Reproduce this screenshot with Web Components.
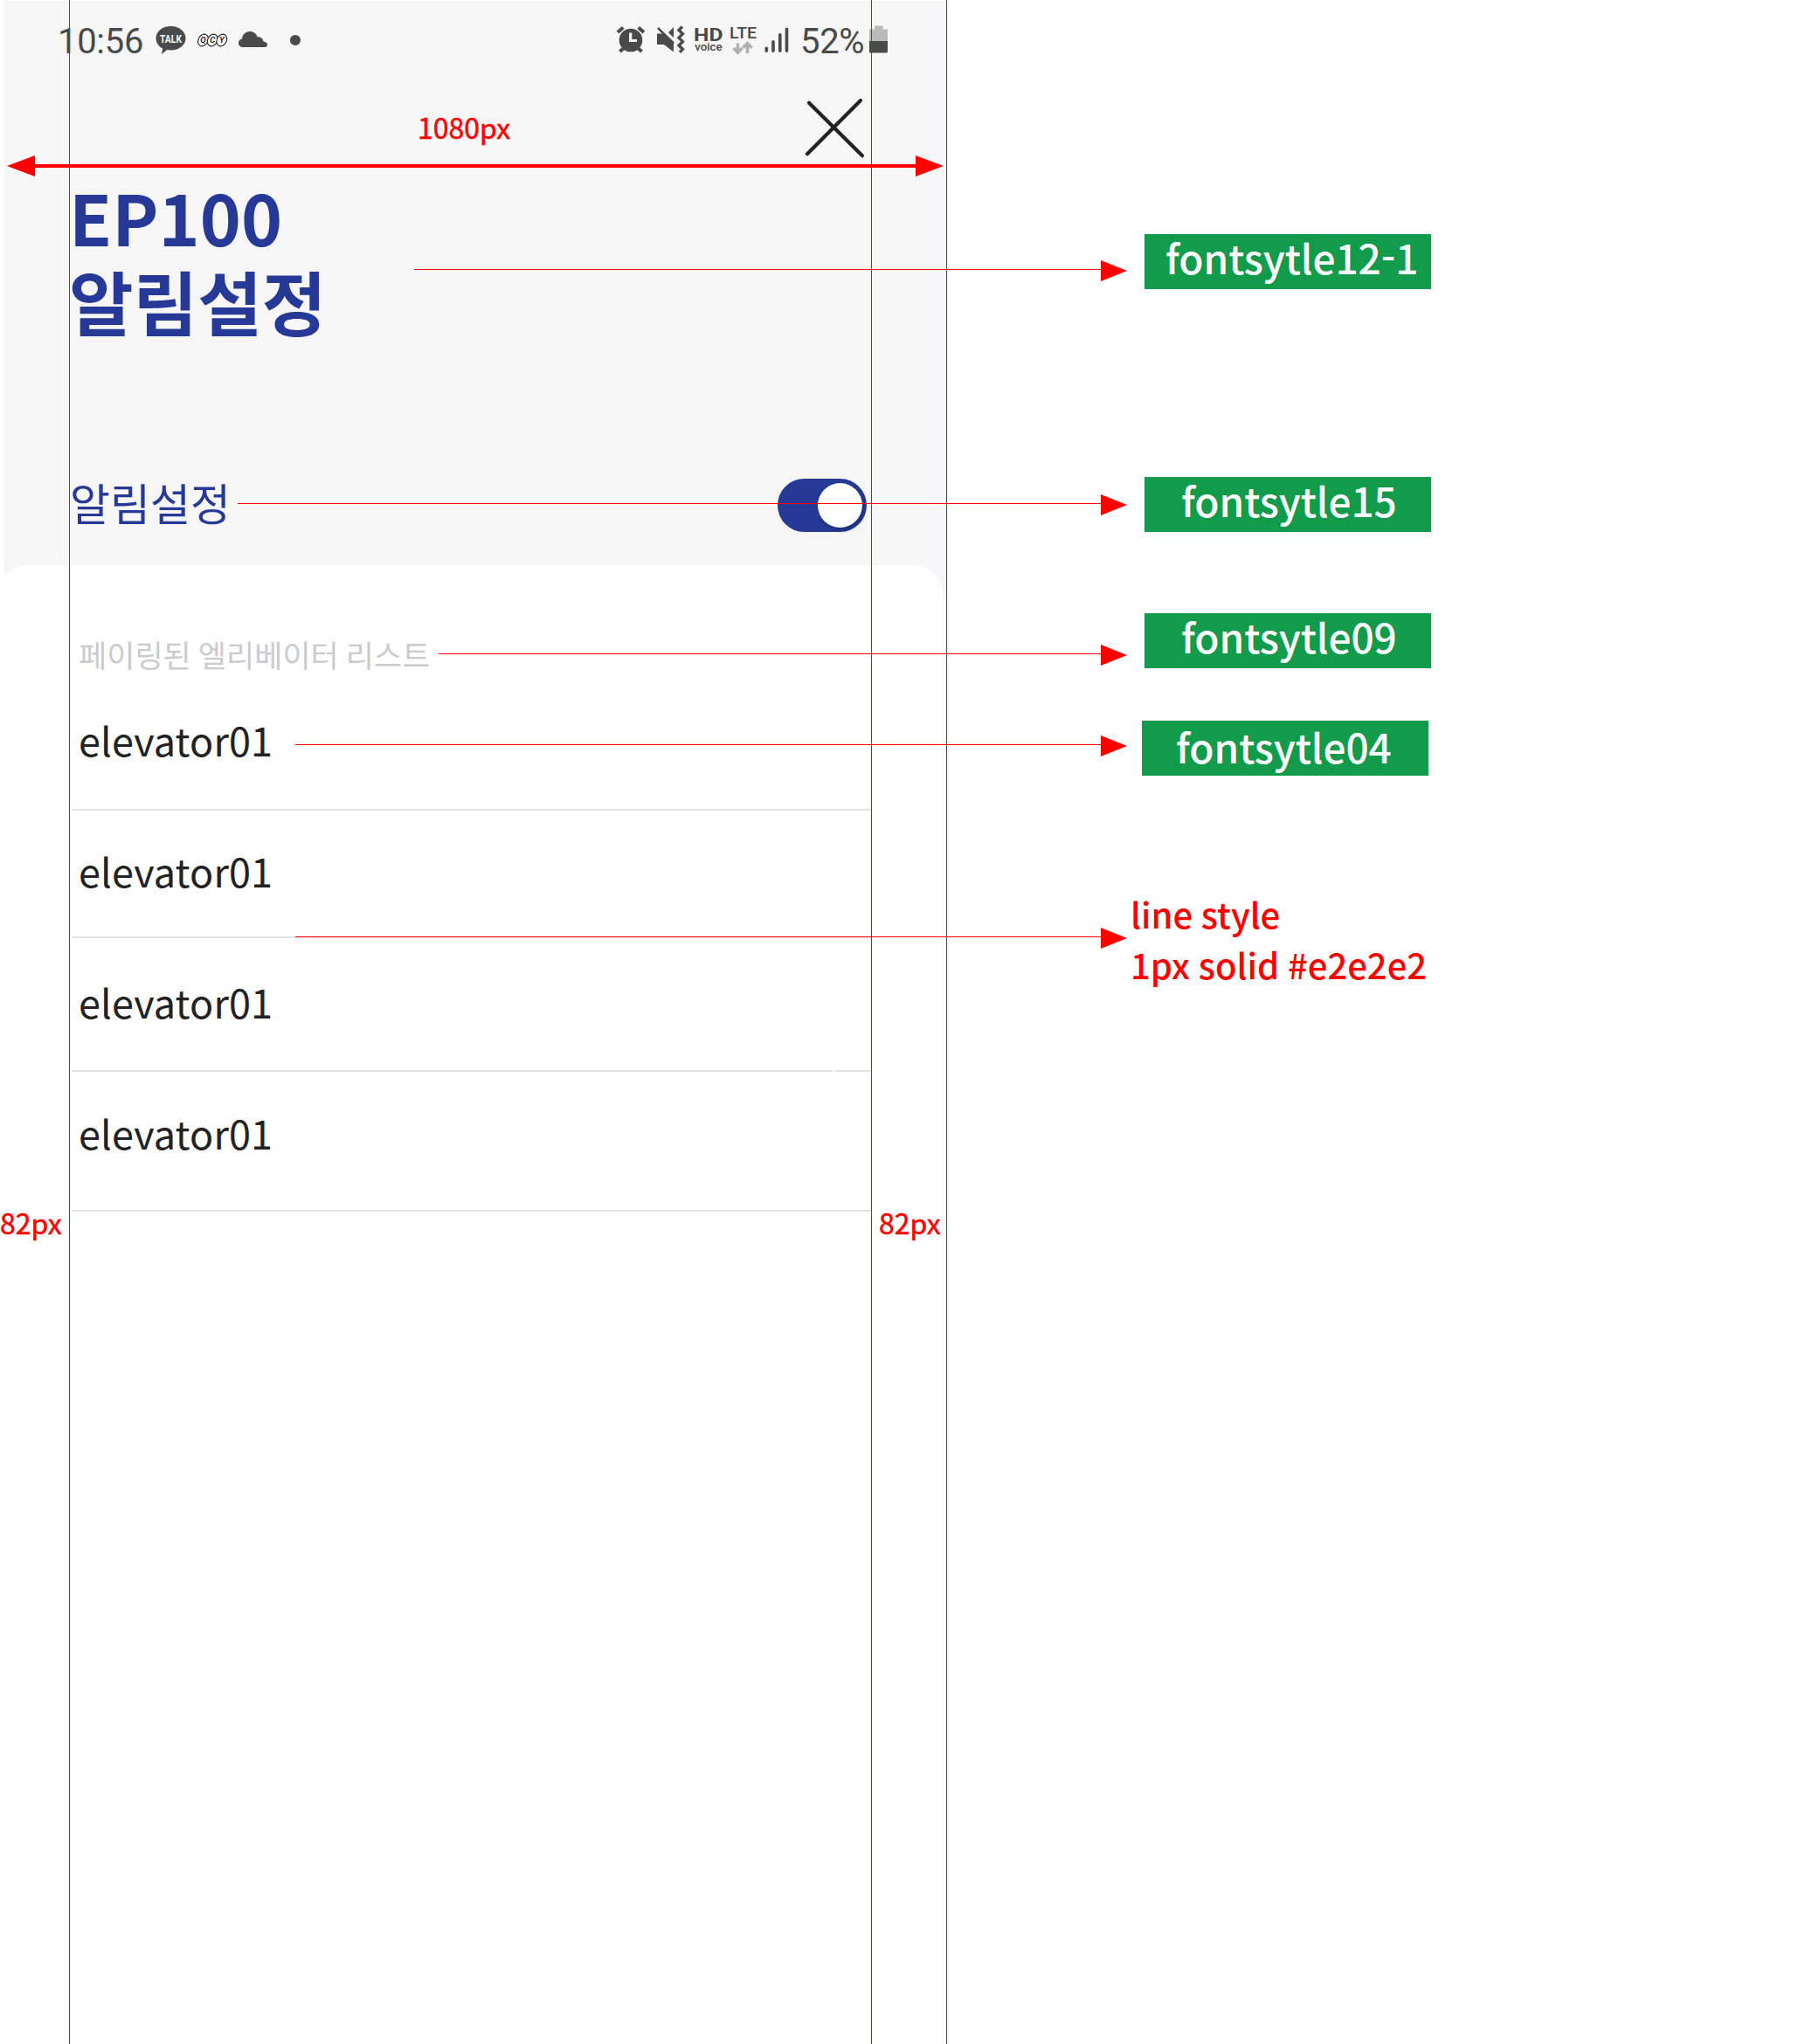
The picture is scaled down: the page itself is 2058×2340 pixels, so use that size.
<!DOCTYPE html>
<html lang="ko">
<head>
<meta charset="utf-8">
<title>EP100 알림설정</title>
<style>
html,body{margin:0;padding:0;background:#fff}
body{font-family:"Noto Sans CJK KR","Noto Sans",sans-serif}
</style>
</head>
<body>
<spec-board>
  <phone-screen>
    <status-bar slot="status"></status-bar>
    <close-button slot="nav"></close-button>
    <page-title slot="title">EP100<br>알림설정</page-title>
    <setting-row slot="setting">알림설정</setting-row>
    <list-heading slot="list">페이링된 엘리베이터 리스트</list-heading>
    <list-row slot="list" style="--above:43px;--below:49px">elevator01</list-row>
    <list-row slot="list" style="--above:39px;--below:45px">elevator01</list-row>
    <list-row slot="list" style="--above:43px;--below:48px;--gap:#fff">elevator01</list-row>
    <list-row slot="list" style="--above:40px;--below:58px">elevator01</list-row>
  </phone-screen>

  <guide-line slot="marks" style="--x:79px"></guide-line>
  <guide-line slot="marks" style="--x:997px"></guide-line>
  <guide-line slot="marks" style="--x:1083px"></guide-line>
  <size-arrow slot="marks" style="--x:8px;--y:178px;--w:1072px"></size-arrow>
  <spec-note slot="marks" style="--x:478px;--y:121px;--s:32px;--lh:48px;--w:400;--stroke:.5px">1080px</spec-note>
  <spec-note slot="marks" style="--x:0px;--y:1375px;--s:32px;--lh:48px;--w:400;--stroke:.5px">82px</spec-note>
  <spec-note slot="marks" style="--x:1006px;--y:1375px;--s:32px;--lh:48px;--w:400;--stroke:.5px">82px</spec-note>
  <call-arrow slot="marks" style="--x:474px;--y:298px"></call-arrow>
  <call-arrow slot="marks" style="--x:272px;--y:566px"></call-arrow>
  <call-arrow slot="marks" style="--x:502px;--y:738px"></call-arrow>
  <call-arrow slot="marks" style="--x:338px;--y:842px"></call-arrow>
  <call-arrow slot="marks" style="--x:338px;--y:1062px"></call-arrow>
  <style-badge slot="marks" style="--x:1310px;--y:267.5px;--pad:24px;--ty:-3px">fontsytle12-1</style-badge>
  <style-badge slot="marks" style="--x:1310px;--y:545.5px;--pad:42px;--ty:-3px">fontsytle15</style-badge>
  <style-badge slot="marks" style="--x:1310px;--y:701.5px;--pad:42px;--ty:-3px">fontsytle09</style-badge>
  <style-badge slot="marks" style="--x:1307px;--y:824.5px;--pad:39px;--ty:0px">fontsytle04</style-badge>
  <spec-note slot="marks" style="--x:1294px;--y:1017px;--s:40px;--lh:58px">line style<br>1px solid #e2e2e2</spec-note>
</spec-board>

<script>
const define=(name,html)=>{
  const t=document.createElement('template');
  t.innerHTML=html;
  customElements.define(name,class extends HTMLElement{
    constructor(){super();this.attachShadow({mode:'open'}).append(t.content.cloneNode(true));}
  });
};

define('spec-board',`<style>:host{display:block;position:relative;width:2058px;height:2340px;overflow:hidden;background:#fff}</style><slot></slot><slot name="marks"></slot>`);

define('phone-screen',`<style>
:host{display:flex;flex-direction:column;width:1086px;height:2340px}
.top{margin:1px 0 0 5px;width:1081px;height:646px;background:#f6f6f6;display:flex;flex-direction:column}
.nav{height:108px;display:flex;justify-content:flex-end;padding:20px 97px 0 0;box-sizing:border-box}
.body{flex:1;display:flex;background:linear-gradient(#f6f6f6,#f6f6f6) 5px 0/1081px 34px no-repeat,linear-gradient(90deg,#fff 1079px,#f9f9f9 1079px 1081px,#fff 1081px 1084px,#f7f7f7 1084px)}
.sheet{width:1080px;margin-left:-1px;border-radius:32px 32px 0 0;background:#fff;display:flex;flex-direction:column;padding:77px 80px 0 83px;box-sizing:border-box}
</style>
<div class="top"><slot name="status"></slot><div class="nav"><slot name="nav"></slot></div><slot name="title"></slot><slot name="setting"></slot></div>
<div class="body"><div class="sheet"><slot name="list"></slot></div></div>`);

define('status-bar',`<style>
:host{display:flex;justify-content:space-between;align-items:center;height:90px;padding:0 69px 0 61px;font-family:Roboto,sans-serif;color:#4a4a4a;box-sizing:border-box}
div{display:flex;align-items:center}
svg{display:block;flex:none}
.t{font-size:40px;line-height:48px;white-space:nowrap;letter-spacing:-.3px;padding-top:4px;width:110px;box-sizing:border-box}
.p{width:79px}
</style>
<div><span class="t">10:56</span>
<svg width="170" height="40" viewBox="176 26 170 40">
<path fill="#4a4a4a" d="M195.500 30c9.500 0 17 6 17 13.700s-7.500 13.800-17 13.800c-1.500 0-3-.2-4.300-.4l-6.200 5 1.200-6.600c-4.600-2.300-7.700-6.800-7.700-11.800 0-7.700 7.500-13.700 17-13.700z"/>
<text x="183" y="48.500" font-size="12" font-weight="700" fill="#f5f5f5" textLength="25" lengthAdjust="spacingAndGlyphs">TALK</text>
<g fill="#fff" stroke="#2a2424" stroke-width="1.100"><ellipse cx="232.500" cy="46" rx="5.500" ry="7.200" transform="rotate(28 232.500 46)"/><ellipse cx="243.200" cy="46" rx="5.500" ry="7.200" transform="rotate(28 243.200 46)"/><ellipse cx="253.800" cy="46" rx="5.500" ry="7.200" transform="rotate(28 253.800 46)"/></g>
<g font-size="9.500" font-weight="700" font-style="italic" fill="#2a2424" text-anchor="middle"><text x="232.500" y="49.300">Q</text><text x="243.200" y="49.300">C</text><text x="253.800" y="49.300">Y</text></g>
<path fill="#4a4a4a" d="M278.500 54c-3.300 0-5.500-2-5.500-4.800 0-2.500 1.700-4.300 4-4.700.5-5 4.300-8.500 9-8.500 4 0 7.400 2.500 8.600 6.200 4 0 6.600 2 7 5.600 2.600.2 4.400 1.500 4.400 3.400 0 1.700-1.200 2.800-3 2.800z"/>
<circle cx="338" cy="46" r="6.100" fill="#4a4a4a"/></svg></div>
<div><svg width="212" height="40" viewBox="704 26 212 40">
<g fill="none" stroke="#4a4a4a">
<path stroke-width="4" d="M707 37l6.300-5.500M737 37l-6.300-5.500"/>
<path stroke-width="4" d="M709.500 59l5-4.500M734.500 59l-5-4.500"/></g>
<circle cx="722" cy="46" r="13.300" fill="#4a4a4a"/><path d="M721.700 37.500v9h7.300" fill="none" stroke="#f5f5f5" stroke-width="3.200"/>
<path fill="#4a4a4a" d="M752 38.500h7.500L771 49.500v10L760 51h-8zM771 31v12l-6-5.700z"/>
<path d="M753 32l18 17.500" stroke="#4a4a4a" stroke-width="2.600"/>
<path d="M781 30.500l-4 4 4.500 4.200-4.500 4.500 4.500 4.500-4.500 4.300 4.500 4.300-3.500 3.500" fill="none" stroke="#4a4a4a" stroke-width="3.300"/>
<g fill="#4a4a4a"><text x="794" y="46.500" font-size="19.500" font-weight="700" textLength="33.500" lengthAdjust="spacingAndGlyphs">HD</text><text x="795.200" y="58" font-size="13" font-weight="500" textLength="31.500" lengthAdjust="spacingAndGlyphs">voice</text><text x="835" y="44.300" font-size="18.500" font-weight="500" textLength="31" lengthAdjust="spacingAndGlyphs">LTE</text></g>
<path fill="none" stroke="#b0b0b0" stroke-width="3.500" d="M844.500 49.500v10.500M839.500 55l5 5.200 5-5.200M855.500 61V50M850.500 54.800l5-5.200 5 5.200"/>
<g fill="none" stroke="#4a4a4a" stroke-width="3.600" stroke-linecap="round"><path d="M877.300 55.300v3M885 47.700v10.600M892.800 39.800v18.500M900.500 33.300v25"/></g></svg>
<span class="t p">52%</span>
<svg width="22" height="40" viewBox="995 26 22 40"><path fill="#bababa" d="M1001 29.500h9.500v4h4.500q1 0 1 1V47h-21V34.500q0-1 1-1h5z"/><path fill="#4a4a4a" d="M995 47h21v12q0 1.500-1.500 1.500h-18q-1.500 0-1.500-1.500z"/></svg></div>`);

define('close-button',`<style>:host{display:block;width:66px;height:66px}svg{display:block;overflow:visible}</style>
<svg width="66" height="66" viewBox="0 0 66 66" fill="none" stroke="#222" stroke-width="4.200" stroke-linecap="round"><path d="M3 6.700L64 67.300M62 4L1 65.300"/></svg>`);

define('page-title',`<style>:host{display:block;padding-left:74px;font-size:80px;line-height:96px;font-weight:700;color:#263996}</style><slot></slot>`);

define('setting-row',`<style>:host{display:flex;justify-content:space-between;align-items:flex-start;margin-top:153px;padding:0 94px 0 75px;font-size:50px;line-height:60px;color:#263996}
toggle-switch{margin-top:4px}</style><span><slot></slot></span><toggle-switch></toggle-switch>`);

define('toggle-switch',`<style>:host{display:flex;justify-content:flex-end;align-items:center;width:102px;height:61px;border-radius:31px;background:#263996;padding-right:5px;box-sizing:border-box}
i{display:block;width:51px;height:51px;border-radius:50%;background:#fff;box-shadow:2px 3px 5px rgba(0,0,0,.2)}</style><i></i>`);

define('list-heading',`<style>:host{display:block;padding-left:8px;height:50px;font-size:35px;line-height:50px;word-spacing:-1.800px;color:#cbcbcb}</style><slot></slot>`);

define('list-row',`<style>:host{display:block;font-size:45px;line-height:60px;color:#222;letter-spacing:.12px}
.l{padding:var(--above) 0 var(--below) 8px}
hr{margin:0;border:0;height:2px;background:linear-gradient(90deg,#e2e2e2 871px,var(--gap,#e2e2e2) 871px 874px,#e2e2e2 874px)}</style><div class="l"><slot></slot></div><hr>`);

define('guide-line',`<style>:host{position:absolute;left:var(--x);top:0;width:1px;height:2340px;background:#f00}</style>`);

define('size-arrow',`<style>:host{position:absolute;left:var(--x);top:var(--y);width:var(--w);height:24px;display:flex;align-items:center}
i{width:32px;height:24px;background:#f00;clip-path:polygon(0 50%,100% 0,100% 100%)}i:last-child{transform:scaleX(-1)}b{flex:1;height:4px;background:#f00}</style><i></i><b></b><i></i>`);

define('call-arrow',`<style>:host{position:absolute;left:var(--x);top:var(--y);width:calc(1290px - var(--x));height:24px;display:flex;align-items:flex-start}
b{flex:1;height:1px;margin-top:10px;background:#f00}i{width:30px;height:24px;background:#f00;clip-path:polygon(0 0,100% 50%,0 100%)}</style><b></b><i></i>`);

define('spec-note',`<style>:host{position:absolute;left:var(--x);top:var(--y);font-size:var(--s);line-height:var(--lh);font-weight:var(--w,500);-webkit-text-stroke:var(--stroke,0px) #f00;word-spacing:-1.500px;color:#f00;white-space:nowrap}</style><slot></slot>`);

define('style-badge',`<style>:host{position:absolute;left:var(--x);top:var(--y);width:327.700px;height:63.500px;box-sizing:border-box;padding-left:var(--pad);background:#129b4b;color:#fff;font-size:46px;line-height:58px;font-weight:500;letter-spacing:-.08px;white-space:nowrap}
span{display:block;margin-top:var(--ty)}</style><span><slot></slot></span>`);
</script>
</body>
</html>
